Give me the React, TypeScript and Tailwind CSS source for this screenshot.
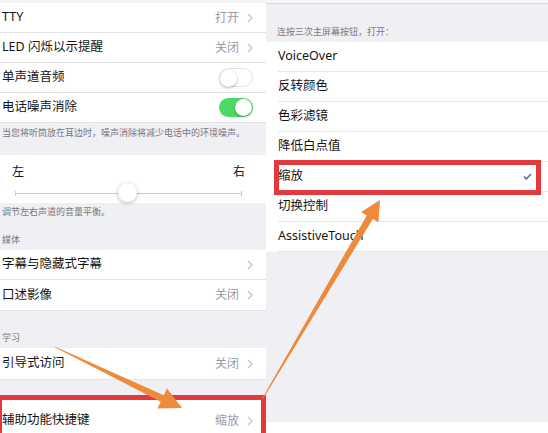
import React from 'react'

const font = { fontFamily: '"Noto Sans", "Noto Sans CJK SC", sans-serif' }

function Chevron() {
  return (
    <svg width="6" height="10" viewBox="0 0 6 10" className="ml-[8px]">
      <path d="M1 1 L5 5 L1 9" fill="none" stroke="#c4c4c9" strokeWidth="1.3" />
    </svg>
  )
}

function Toggle({ on }: { on: boolean }) {
  return (
    <div
      className={`w-[34px] h-[19px] rounded-full relative ${
        on ? 'bg-[#4cd964]' : 'bg-white border border-[#e2e2e6]'
      }`}
    >
      <div
        className={`absolute top-[1px] w-[17px] h-[17px] rounded-full bg-white shadow-[0_1px_3px_rgba(0,0,0,0.3)] ${
          on ? 'right-[1px]' : 'left-[0px] top-[0px]'
        }`}
      />
    </div>
  )
}

function LeftRow({
  label,
  value,
  chevron,
  toggle,
  h = 'h-[30px]',
}: {
  label: string
  value?: string
  chevron?: boolean
  toggle?: 'on' | 'off'
  h?: string
}) {
  return (
    <div className={`${h} bg-white border-b border-[#e3e3e7] flex items-center justify-between pl-[2px] pr-[13px]`}>
      <span className="text-[12.5px] text-[#141414]">{label}</span>
      <div className="flex items-center">
        {value && <span className="text-[12px] text-[#9a9a9f]">{value}</span>}
        {chevron && <Chevron />}
        {toggle && <Toggle on={toggle === 'on'} />}
      </div>
    </div>
  )
}

function RightRow({ label, checked }: { label: string; checked?: boolean }) {
  return (
    <div className="h-[30px] bg-white pl-[12px] flex">
      <div className="flex-1 border-b border-[#e6e6ea] flex items-center justify-between pr-[16px]">
        <span className="text-[12.5px] text-[#141414]">{label}</span>
        {checked && (
          <svg width="9" height="7" viewBox="0 0 9 7">
            <path d="M1 3.5 L3.3 6 L8 1" fill="none" stroke="#3f6d9c" strokeWidth="1.4" />
          </svg>
        )}
      </div>
    </div>
  )
}

export default function App() {
  return (
    <div className="w-[548px] h-[433px] overflow-hidden relative flex bg-white" style={font}>
      {/* left screen */}
      <div className="w-[266px] flex flex-col bg-[#efeff4]">
        <div className="h-[3px] bg-[#f4f4f7]" />
        <LeftRow label="TTY" value="打开" chevron />
        <LeftRow label="LED 闪烁以示提醒" value="关闭" chevron />
        <LeftRow label="单声道音频" toggle="off" />
        <LeftRow label="电话噪声消除" toggle="on" />
        <div className="h-[32px] px-[2px] pt-[3px] text-[9px] leading-[14px] text-[#77777c]">
          当您将听筒放在耳边时，噪声消除将减少电话中的环境噪声。
        </div>
        <div className="h-[48px] bg-white px-[12px] pr-[21px] flex flex-col">
          <div className="flex justify-between text-[12px] text-[#141414] leading-[14px] mt-[10px]">
            <span>左</span>
            <span>右</span>
          </div>
          <div className="relative mt-[9px] mx-[3px] h-[10px] flex items-center">
            <div className="flex-1 h-[1px] bg-[#c9c9ce]" />
            <div className="absolute left-0 w-[1px] h-[5px] bg-[#c9c9ce]" />
            <div className="absolute right-0 w-[1px] h-[5px] bg-[#c9c9ce]" />
            <div className="absolute left-[103px] -top-[5px] w-[19px] h-[19px] rounded-full bg-white shadow-[0_1px_4px_rgba(0,0,0,0.28)]" />
          </div>
        </div>
        <div className="h-[47px] px-[2px] text-[9px] leading-[14px] text-[#77777c] flex flex-col">
          <span className="mt-[2px]">调节左右声道的音量平衡。</span>
          <span className="mt-[14px]">媒体</span>
        </div>
        <LeftRow label="字幕与隐藏式字幕" chevron />
        <LeftRow label="口述影像" value="关闭" chevron h="h-[31px]" />
        <div className="h-[37px] px-[2px] text-[9px] leading-[14px] text-[#77777c] flex items-end pb-[3px]">
          学习
        </div>
        <LeftRow label="引导式访问" value="关闭" chevron h="h-[32px]" />
        <div className="h-[16px]" />
        <div className="flex-1 bg-white flex items-start justify-between pl-[2px] pr-[13px] pt-[15px]">
          <span className="text-[12.5px] text-[#141414]">辅助功能快捷键</span>
          <div className="flex items-center pt-[1px]">
            <span className="text-[12px] text-[#9a9a9f]">缩放</span>
            <Chevron />
          </div>
        </div>
      </div>

      {/* right screen */}
      <div className="flex-1 flex flex-col bg-[#efeff4]">
        <div className="h-[42px] border-t-[3px] border-[#f7f7f9] flex flex-col">
          <div className="h-[1px] bg-[#d9d9de]" />
          <div className="mt-auto pl-[11px] pb-[3px] text-[9px] leading-[14px] text-[#7a7a80]">
            连按三次主屏幕按钮，打开：
          </div>
        </div>
        <RightRow label="VoiceOver" />
        <RightRow label="反转颜色" />
        <RightRow label="色彩滤镜" />
        <RightRow label="降低白点值" />
        <RightRow label="缩放" checked />
        <RightRow label="切换控制" />
        <RightRow label="AssistiveTouch" />
        <div className="flex-1" />
        <div className="h-[11px] bg-white" />
      </div>

      {/* red highlight boxes */}
      <div className="absolute left-[274px] top-[160px] w-[267px] h-[35px] border-[5px] border-[#e23a3c]" />
      <div className="absolute -left-[3px] top-[395px] w-[269px] h-[50px] border-[5px] border-[#e23a3c]" />

      {/* arrows */}
      <svg className="absolute inset-0 pointer-events-none" width="548" height="433" viewBox="0 0 548 433">
        <polygon
          points="54.8,346.6 163.7,395.3 167.0,388.6 182,408 157.4,408.4 160.7,401.7 55.2,347.4"
          fill="#ee8a3c"
        />
        <polygon
          points="262.6,397.7 366.8,215.4 361.2,212.1 380,200 378.4,222.3 372.8,219.0 263.4,398.3"
          fill="#ee8a3c"
        />
      </svg>
    </div>
  )
}
